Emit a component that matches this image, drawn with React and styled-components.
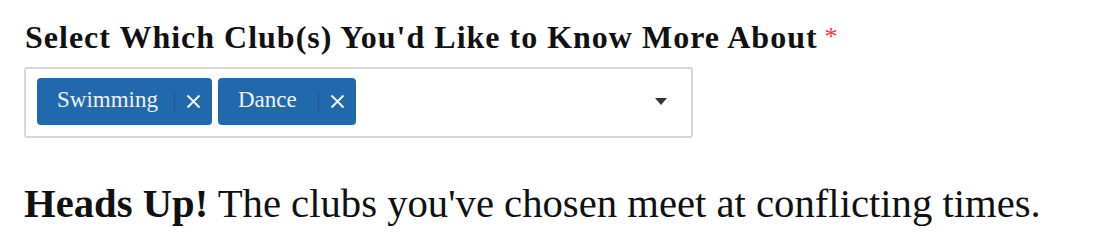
import React from "react";
import styled, { createGlobalStyle } from "styled-components";

const Global = createGlobalStyle`
  html, body { margin: 0; padding: 0; background: #fff; }
  body { font-family: "Liberation Serif", "Times New Roman", serif; color: #111; }
`;

const Page = styled.div`
  padding: 19px 24px 0 24px;
  display: flex;
  flex-direction: column;
`;

const Label = styled.label`
  font-size: 32px;
  font-weight: 700;
  line-height: 36px;
  color: #111;
  letter-spacing: 1px;
  margin-left: 1px;
`;

const Required = styled.span`
  color: #e0403a;
  font-weight: 400;
  font-size: 26px;
  margin-left: 7px;
  vertical-align: 3px;
`;

const SelectBox = styled.div`
  margin-top: 12px;
  width: 669px;
  height: 71px;
  box-sizing: border-box;
  border: 2px solid #d6d6d6;
  border-radius: 3px;
  display: flex;
  align-items: center;
  padding: 0 24px 2px 11px;
`;

const Tags = styled.div`
  display: flex;
  gap: 6px;
  flex: 1;
`;

const Tag = styled.div`
  display: flex;
  align-items: center;
  height: 47px;
  background: #2268ad;
  border-radius: 4px;
  color: #eef3fa;
  font-size: 23px;
  padding: 0 0 0 20px;
  box-sizing: border-box;
  width: ${(p) => p.$w}px;
`;

const TagText = styled.span`
  flex: 1;
  padding-bottom: 3px;
`;

const Divider = styled.span`
  width: 1px;
  height: 22px;
  background: #1a5690;
`;

const Remove = styled.span`
  width: 37px;
  display: flex;
  justify-content: center;
  align-items: center;
`;

const Caret = styled.div`
  width: 0;
  height: 0;
  border-left: 6px solid transparent;
  border-right: 6px solid transparent;
  border-top: 7px solid #333;
`;

const Notice = styled.p`
  margin: 42px 0 0 0;
  font-size: 40.7px;
  line-height: 48px;
  color: #111;
`;

const XIcon = () => (
  <svg width="15" height="15" viewBox="0 0 15 15">
    <path d="M1.5 1.5L13.5 13.5M13.5 1.5L1.5 13.5" stroke="#eef3fa" strokeWidth="2" />
  </svg>
);

export default function App() {
  const clubs = [
    { name: "Swimming", w: 175 },
    { name: "Dance", w: 138 },
  ];
  return (
    <>
      <Global />
      <Page>
        <Label>
          Select Which Club(s) You'd Like to Know More About<Required>*</Required>
        </Label>
        <SelectBox>
          <Tags>
            {clubs.map((c) => (
              <Tag key={c.name} $w={c.w}>
                <TagText>{c.name}</TagText>
                <Divider />
                <Remove>
                  <XIcon />
                </Remove>
              </Tag>
            ))}
          </Tags>
          <Caret />
        </SelectBox>
        <Notice>
          <strong>Heads Up!</strong> The clubs you've chosen meet at conflicting times.
        </Notice>
      </Page>
    </>
  );
}
